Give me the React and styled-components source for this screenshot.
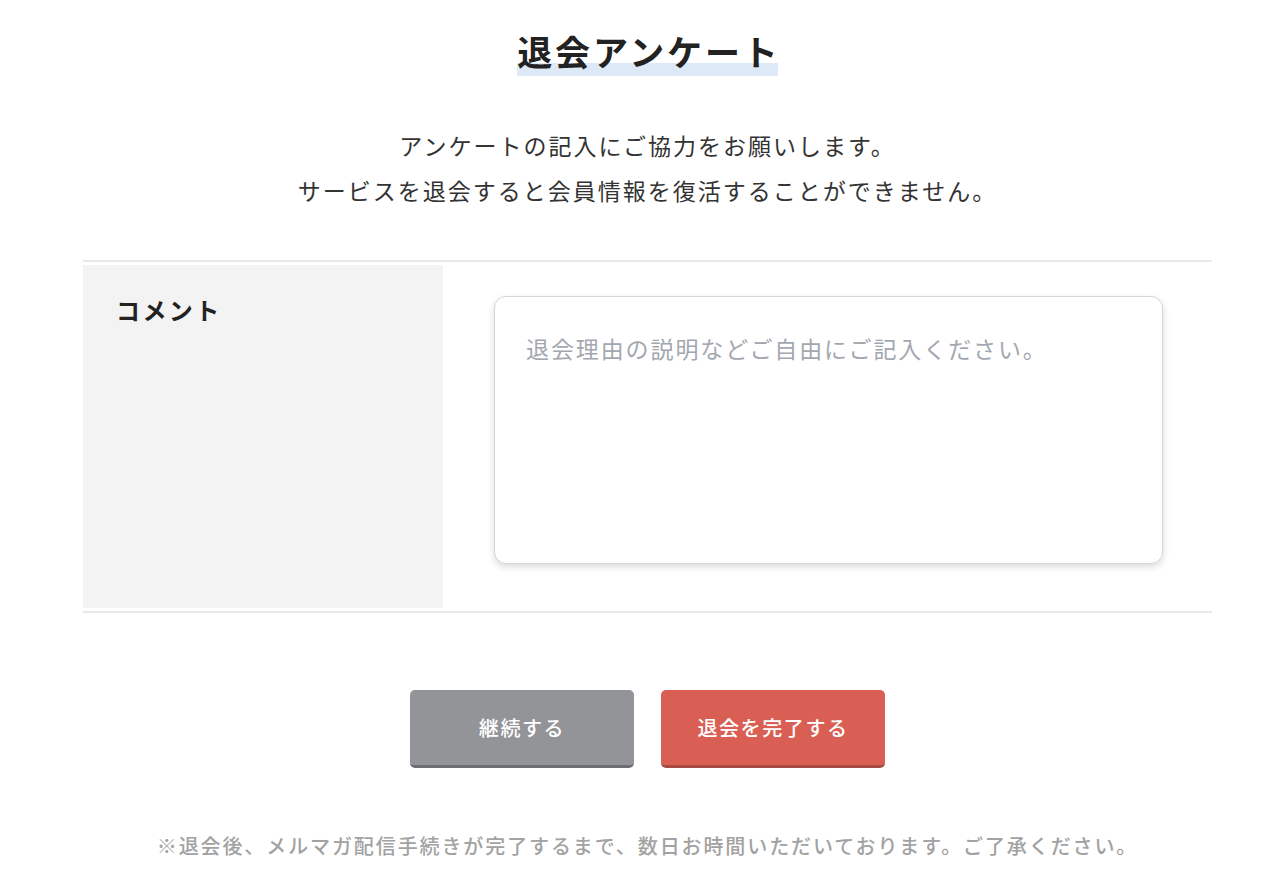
import React from "react";
import styled, { createGlobalStyle } from "styled-components";

const Global = createGlobalStyle`
  html, body { margin: 0; padding: 0; background: #fff; }
  body {
    font-family: "Noto Sans CJK JP", "Noto Sans", sans-serif;
    color: #222;
  }
  * { box-sizing: border-box; }
`;

const Page = styled.main`
  width: 1129px;
  margin-left: 83px;
  padding-top: 26px;
  display: flex;
  flex-direction: column;
  align-items: center;
`;

const Title = styled.h1`
  margin: 0;
  font-size: 35px;
  font-weight: 700;
  letter-spacing: 0.08em;
  line-height: 50px;
  color: #222;
`;

const Marked = styled.span`
  display: inline-block;
  margin-right: -0.08em;
  background-image: linear-gradient(transparent calc(100% - 13px), #dde9f6 calc(100% - 13px));
  background-repeat: no-repeat;
  background-size: calc(100% - 0.08em) 100%;
`;

const Lead = styled.p`
  margin: 47px 0 0;
  text-align: center;
  font-size: 23px;
  line-height: 45px;
  letter-spacing: 2px;
  color: #333;
`;

const Table = styled.section`
  align-self: stretch;
  margin-top: 47px;
  border-top: 2px solid #e9e9e9;
  border-bottom: 2px solid #e9e9e9;
  padding: 3px 0;
  display: grid;
  grid-template-columns: 360px 1fr;
`;

const Head = styled.div`
  background: #f3f3f3;
  padding: 27px 0 0 33px;
  font-size: 24px;
  font-weight: 700;
  line-height: 36px;
  letter-spacing: 0.1em;
  color: #222;
`;

const Cell = styled.div`
  padding: 31px 49px 44px 51px;
`;

const TextArea = styled.textarea`
  display: block;
  width: 100%;
  height: 268px;
  resize: none;
  border: 1px solid #d6d6d6;
  border-radius: 12px;
  box-shadow: 0 3px 7px rgba(0, 0, 0, 0.14);
  padding: 33px 31px;
  font-family: "Noto Sans CJK JP", "Noto Sans", sans-serif;
  font-size: 23px;
  line-height: 36px;
  letter-spacing: 1.9px;
  color: #333;
  outline: none;
  &::placeholder { color: #a3a7b0; }
`;

const Actions = styled.div`
  display: flex;
  gap: 27px;
  margin-top: 77px;
`;

const Button = styled.button`
  width: 224px;
  height: 78px;
  border: none;
  border-radius: 5px;
  border-bottom: 3px solid ${(p) => (p.$danger ? "#a84a43" : "#6c6e74")};
  background: ${(p) => (p.$danger ? "#d95f55" : "#939498")};
  color: #fff;
  font-family: "Noto Sans CJK JP", "Noto Sans", sans-serif;
  font-size: 20px;
  font-weight: 500;
  letter-spacing: 0.08em;
  cursor: pointer;
  padding: 0;
`;

const Note = styled.p`
  margin: 63px 0 0;
  font-size: 20px;
  line-height: 30px;
  font-weight: 500;
  letter-spacing: 1.9px;
  color: #a2a2a2;
`;

export default function App() {
  return (
    <>
      <Global />
      <Page>
        <Title>
          <Marked>退会アンケート</Marked>
        </Title>
        <Lead>
          アンケートの記入にご協力をお願いします。
          <br />
          サービスを退会すると会員情報を復活することができません。
        </Lead>
        <Table>
          <Head>コメント</Head>
          <Cell>
            <TextArea placeholder="退会理由の説明などご自由にご記入ください。" />
          </Cell>
        </Table>
        <Actions>
          <Button>継続する</Button>
          <Button $danger>退会を完了する</Button>
        </Actions>
        <Note>※退会後、メルマガ配信手続きが完了するまで、数日お時間いただいております。ご了承ください。</Note>
      </Page>
    </>
  );
}
